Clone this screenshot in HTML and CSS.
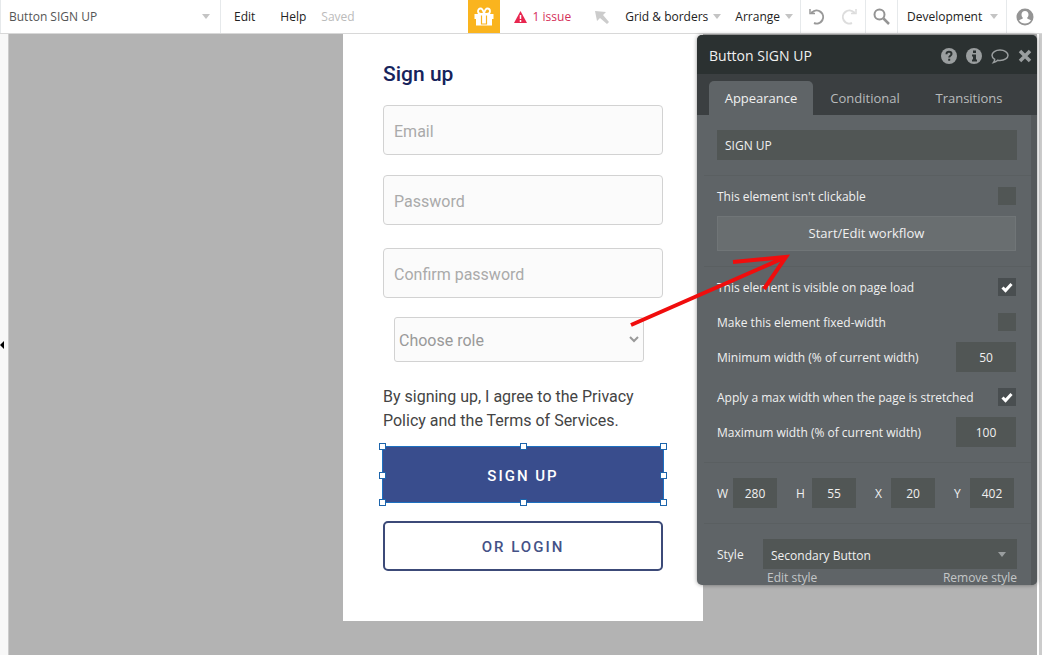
FILE: index.html
```html
<!DOCTYPE html>
<html lang="en">
<head>
    <meta charset="UTF-8">
    <meta name="viewport" content="width=device-width, initial-scale=1.0">
    <title>Editor - Button SIGN UP</title>
    <link rel="stylesheet" href="styles.css">
</head>
<body>
    <!-- Top bar -->
    <header class="toolbar">
        <button class="element-picker">Button SIGN UP <span class="caret"></span></button>
        <nav class="menu">
            <button>Edit</button>
            <button>Help</button>
            <span class="saved">Saved</span>
        </nav>
        <button class="gift" aria-label="Gift">
            <svg width="22" height="20" viewBox="0 0 22 20">
                <path d="M1.500 7h19v5h-19zM3 12h16v6.500H3z" fill="#fff"/>
                <path d="M10.500 7H8C6 7 5 5.800 5 4.300S6 1.500 7.500 1.500c2 0 3 3 3.500 5 .5-2 1.500-5 3.500-5C16 1.500 17 2.800 17 4.300S16 7 14 7z" fill="none" stroke="#fff" stroke-width="1.800"/>
                <path d="M8.500 8.500v8.500h5V8.500" fill="none" stroke="#fab41e" stroke-width="1.200"/>
            </svg>
        </button>
        <button class="issues">
            <svg width="13" height="12" viewBox="0 0 13 12">
                <path d="M6.500 0L13 12H0z" fill="#e8264f"/>
                <path d="M6.500 4v4M6.500 9v2" stroke="#fff" stroke-width="1.500"/>
            </svg>
            1 issue
        </button>
        <svg class="pointer" width="14" height="14" viewBox="0 0 14 14">
            <path d="M0 1l11 1-3 3 6 7-2 2-7-6-3 3z" fill="#ccc"/>
        </svg>
        <button class="drop">Grid &amp; borders <span class="caret"></span></button>
        <button class="drop">Arrange <span class="caret"></span></button>
        <div class="history">
            <button aria-label="Undo">
                <svg width="18" height="18" viewBox="0 0 18 18" fill="none" stroke="#999" stroke-width="2">
                    <path d="M3 4.500h1A6.500 6.500 0 1 1 6 15"/>
                    <path d="M2 1v4.500h5" stroke-width="1.500"/>
                </svg>
            </button>
            <button aria-label="Redo">
                <svg width="18" height="18" viewBox="0 0 18 18" fill="none" stroke="#ddd" stroke-width="2">
                    <path d="M15 4.500h-1A6.500 6.500 0 1 0 12 15"/>
                    <path d="M16 1v4.500h-5" stroke-width="1.500"/>
                </svg>
            </button>
        </div>
        <button class="search" aria-label="Search">
            <svg width="17" height="17" viewBox="0 0 17 17" fill="none" stroke="#949494">
                <circle cx="6.500" cy="6.500" r="5" stroke-width="2"/>
                <path d="M10.500 10.500l5.500 5.500" stroke-width="2.500"/>
            </svg>
        </button>
        <button class="version">Development <span class="caret"></span></button>
        <button class="account" aria-label="Account">
            <svg width="18" height="18" viewBox="0 0 18 18">
                <circle cx="9" cy="9" r="8.500" fill="#949494"/>
                <path d="M9 3c2.200 0 3.500 1.500 3.500 3.600 0 1.500-.6 2.700-1.500 3.400.3 1 3 1.200 4 2.500-1.500 2-3.500 3-6 3s-4.500-1-6-3c1-1.300 3.700-1.500 4-2.500-.9-.7-1.500-1.900-1.500-3.400C5.500 4.500 6.800 3 9 3z" fill="#fff"/>
            </svg>
        </button>
    </header>

    <main class="workspace">
        <div class="gutter-left">
            <svg width="4" height="8" viewBox="0 0 4 8"><path d="M4 0v8L0 4z"/></svg>
        </div>

        <!-- Page being edited -->
        <div class="canvas">
            <form class="page">
                <h1>Sign up</h1>
                <input class="field" type="email" placeholder="Email" aria-label="Email">
                <input class="field" type="password" placeholder="Password" aria-label="Password">
                <input class="field confirm" type="password" placeholder="Confirm password" aria-label="Confirm password">
                <div class="role">
                    <select aria-label="Choose role">
                        <option>Choose role</option>
                    </select>
                    <svg width="10" height="7" viewBox="0 0 10 7"><path d="M1 1l4 4 4-4" fill="none" stroke="#999" stroke-width="2"/></svg>
                </div>
                <p class="terms">By signing up, I agree to the Privacy Policy and the Terms of Services.</p>
                <div class="selected">
                    <button type="button" class="btn-signup">SIGN UP</button>
                    <span class="handle top left"></span>
                    <span class="handle top center"></span>
                    <span class="handle top right"></span>
                    <span class="handle middle left"></span>
                    <span class="handle middle right"></span>
                    <span class="handle bottom left"></span>
                    <span class="handle bottom center"></span>
                    <span class="handle bottom right"></span>
                </div>
                <button type="button" class="btn-login">OR LOGIN</button>
            </form>
        </div>
        <div class="gutter-right"></div>

        <!-- Property editor, floats over the canvas -->
        <aside class="panel">
            <div class="panel-inner">
                <div class="panel-head">
                    <h2>Button SIGN UP</h2>
                    <button aria-label="Help">
                        <svg width="16" height="16" viewBox="0 0 16 16">
                            <circle cx="8" cy="8" r="8" fill="#9a9e9f"/>
                            <path d="M5.500 6.200C5.500 4.500 6.500 3.800 8 3.800s2.500.8 2.500 2.200c0 1.800-2.300 1.700-2.300 3.500M8.200 10.800v2" fill="none" stroke="#2b3131" stroke-width="2"/>
                        </svg>
                    </button>
                    <button aria-label="Info">
                        <svg width="16" height="16" viewBox="0 0 16 16">
                            <circle cx="8" cy="8" r="8" fill="#9a9e9f"/>
                            <path d="M7 2.500h3v2.500H7zM6 6.500h4v5h1v2H6v-2h1v-3H6z" fill="#2b3131"/>
                        </svg>
                    </button>
                    <button aria-label="Comment">
                        <svg width="18" height="16" viewBox="0 0 18 16">
                            <path d="M9 2c4.500 0 8 2.300 8 5.200s-3.500 5.200-8 5.200c-.8 0-1.500 0-2.200-.2C5.500 13.500 4 14.200 2.500 14.500c.8-1 1.200-2 1.200-3.200C2 10.300 1 8.900 1 7.200 1 4.300 4.500 2 9 2z" fill="none" stroke="#9a9e9f" stroke-width="1.500"/>
                        </svg>
                    </button>
                    <button aria-label="Close">
                        <svg width="14" height="14" viewBox="0 0 14 14"><path d="M2 2l10 10M12 2L2 12" stroke="#9a9e9f" stroke-width="3.500"/></svg>
                    </button>
                </div>
                <div class="tabs">
                    <button class="active">Appearance</button>
                    <button>Conditional</button>
                    <button>Transitions</button>
                </div>
                <div class="panel-body">
                    <section class="padded">
                        <input class="caption" type="text" value="SIGN UP" aria-label="Caption">
                    </section>
                    <section>
                        <div class="row">
                            <label for="not-clickable">This element isn't clickable</label>
                            <input type="checkbox" id="not-clickable">
                        </div>
                        <button class="workflow">Start/Edit workflow</button>
                    </section>
                    <section>
                        <div class="row">
                            <label for="visible">This element is visible on page load</label>
                            <input type="checkbox" id="visible" checked>
                        </div>
                        <div class="row">
                            <label for="fixed">Make this element fixed-width</label>
                            <input type="checkbox" id="fixed">
                        </div>
                        <div class="row">
                            <label for="min-width">Minimum width (% of current width)</label>
                            <input class="number" type="text" id="min-width" value="50">
                        </div>
                        <div class="row spaced">
                            <label for="apply-max">Apply a max width when the page is stretched</label>
                            <input type="checkbox" id="apply-max" checked>
                        </div>
                        <div class="row">
                            <label for="max-width">Maximum width (% of current width)</label>
                            <input class="number" type="text" id="max-width" value="100">
                        </div>
                    </section>
                    <section class="padded">
                        <div class="dimensions">
                            <label><span>W</span><input type="text" value="280"></label>
                            <label><span>H</span><input type="text" value="55"></label>
                            <label><span>X</span><input type="text" value="20"></label>
                            <label><span>Y</span><input type="text" value="402"></label>
                        </div>
                    </section>
                    <section class="padded">
                        <div class="style-row">
                            <label for="style">Style</label>
                            <div class="style-select">
                                <select id="style">
                                    <option>Secondary Button</option>
                                </select>
                                <span class="caret"></span>
                            </div>
                        </div>
                        <div class="style-links">
                            <a href="#">Edit style</a>
                            <a href="#">Remove style</a>
                        </div>
                    </section>
                </div>
            </div>
            <!-- Arrow to the workflow button -->
            <svg class="arrow" width="165" height="80" viewBox="0 0 165 80">
                <path d="M4 74L159 6M106 11L159 6L137 38" fill="none" stroke="#f00d0d" stroke-width="4"/>
            </svg>
        </aside>
    </main>
</body>
</html>
```
FILE: styles.css
```css
* {
    box-sizing: border-box;
}

body {
    font-family: "Open Sans", sans-serif;
    font-size: 12px;
    margin: 0;
    min-height: 100vh;
    display: flex;
    flex-direction: column;
    color: #222;
    background-color: #fff;
}

button, input, select {
    font: inherit;
    color: inherit;
    margin: 0;
}

button {
    background: none;
    border: none;
    padding: 0;
    cursor: pointer;
}

svg {
    display: block;
    flex: none;
}

.caret {
    border: 4px solid transparent;
    border-top: 5px solid #c4c4c4;
    border-bottom: none;
}

/* Top bar */
.toolbar {
    display: flex;
    align-items: stretch;
    height: 34px;
    border-bottom: 1px solid #d8d8d8;
    white-space: nowrap;
}

.toolbar button {
    display: flex;
    align-items: center;
}

.toolbar .element-picker {
    width: 221px;
    padding: 0 10px 0 8px;
    justify-content: space-between;
    border-left: 1px solid #e6e9eb;
    border-right: 1px solid #e6e9eb;
    color: #555;
}

.menu {
    display: flex;
    align-items: center;
    flex: 1;
    padding-left: 13px;
}

.menu button {
    margin-right: 25px;
}

.saved {
    color: #bbb;
    margin-left: -10px;
}

.toolbar .gift {
    width: 32px;
    justify-content: center;
    background-color: #fab41e;
}

.toolbar .issues {
    gap: 6px;
    margin-left: 14px;
    color: #d5305a;
}

.pointer {
    align-self: center;
    margin: 0 16px 0 24px;
}

.toolbar .drop {
    gap: 5px;
    margin-right: 14px;
}

.toolbar .drop + .history {
    margin-left: -7px;
}

.history {
    display: flex;
    width: 66px;
    justify-content: space-around;
    border-left: 1px solid #e6e9eb;
    border-right: 1px solid #e6e9eb;
}

.toolbar .search {
    width: 31px;
    justify-content: center;
}

.toolbar .version {
    width: 110px;
    padding: 0 8px 0 9px;
    justify-content: space-between;
    border-left: 1px solid #e6e9eb;
    border-right: 1px solid #e6e9eb;
}

.toolbar .account {
    width: 35px;
    justify-content: center;
}

/* Workspace */
.workspace {
    position: relative;
    display: flex;
    flex: 1;
}

.gutter-left {
    display: flex;
    align-items: center;
    width: 9px;
    background-color: #f8f8f8;
    border-right: 1px solid #ccc;
}

.gutter-right {
    width: 5px;
    background-color: #ccc;
    border-left: 2px solid #fff;
}

.canvas {
    flex: 1;
    background-color: #b3b3b3;
}

/* Sign up page */
.page {
    width: 360px;
    margin: 0 auto;
    padding: 26px 40px 50px;
    background-color: #fff;
    font-family: Roboto, sans-serif;
    font-size: 16px;
}

.page h1 {
    margin: 0 0 17px;
    font-size: 21px;
    line-height: 28px;
    font-weight: 500;
    color: #16235c;
}

.field {
    display: block;
    width: 100%;
    height: 50px;
    margin-bottom: 20px;
    padding: 3px 10px 0;
    border: 1px solid #d2d2d2;
    border-radius: 4px;
    background-color: #fbfbfb;
}

.field::placeholder {
    color: #aaa;
}

.field.confirm {
    margin-top: 23px;
    margin-bottom: 19px;
}

.role {
    display: grid;
    align-items: center;
    margin: 0 19px 23px 11px;
}

.role select {
    grid-area: 1 / 1;
    height: 45px;
    padding: 2px 4px 0;
    border: 1px solid #d2d2d2;
    border-radius: 3px;
    background-color: #fbfbfb;
    color: #999;
    appearance: none;
}

.role svg {
    grid-area: 1 / 1;
    justify-self: end;
    margin-right: 5px;
    pointer-events: none;
}

.terms {
    margin: 0 0 14px;
    line-height: 24px;
    color: #444;
}

.selected {
    position: relative;
    height: 55px;
    margin-bottom: 19px;
    outline: 1px solid #1d70c0;
}

.btn-signup {
    width: 100%;
    height: 100%;
    padding-top: 2px;
    background-color: #394d8d;
    color: #fff;
    font-size: 15px;
    font-weight: 500;
    letter-spacing: 2px;
}

.handle {
    position: absolute;
    width: 7px;
    height: 7px;
    background-color: #fff;
    border: 1px solid #1d65ac;
}

.handle.top {
    top: -4px;
}

.handle.middle {
    top: 25px;
}

.handle.bottom {
    bottom: -4px;
}

.handle.left {
    left: -4px;
}

.handle.center {
    left: calc(50% - 3px);
}

.handle.right {
    right: -4px;
}

.btn-login {
    display: block;
    width: 100%;
    height: 50px;
    padding-top: 2px;
    border: 2px solid #3c4a78;
    border-radius: 5px;
    color: #445287;
    font-size: 15px;
    font-weight: 500;
    letter-spacing: 2px;
}

/* Property editor */
.panel {
    position: absolute;
    top: 1px;
    right: 5px;
    width: 340px;
    color: #f0f0f0;
}

.panel-inner {
    height: 550px;
    overflow: hidden;
    border-radius: 5px;
    background-color: #5f6467;
    box-shadow: 0 0 4px rgba(0, 0, 0, 0.4);
}

.panel-head {
    display: flex;
    align-items: center;
    gap: 9px;
    height: 39px;
    padding: 3px 5px 0 12px;
    background-color: #2b3131;
}

.panel-head h2 {
    flex: 1;
    margin: 0;
    padding-bottom: 2px;
    font-size: 14px;
    font-weight: normal;
}

.tabs {
    display: flex;
    height: 41px;
    padding: 7px 12px 0;
    background-color: #3b3f41;
    font-size: 13px;
}

.tabs button {
    width: 104px;
    color: #b8bbbc;
}

.tabs .active {
    background-color: #5f6467;
    border-radius: 5px 5px 0 0;
    color: #f0f0f0;
}

.panel-body {
    border-right: 6px solid #55595b;
}

.panel-body section {
    display: flex;
    flex-direction: column;
    gap: 5px;
    margin-left: 7px;
    padding: 5px 14px 15px 13px;
    border-bottom: 1px solid #5a5f61;
}

.panel-body section.padded {
    padding-top: 15px;
}

.panel-body input, .panel-body select {
    height: 30px;
    border: none;
    border-radius: 0;
    background-color: #515655;
}

.panel-body .caption {
    width: 100%;
    padding: 0 8px;
}

.row {
    display: flex;
    align-items: center;
    justify-content: space-between;
    height: 30px;
    padding-right: 1px;
}

.row.spaced {
    margin-top: 5px;
}

.row input[type="checkbox"] {
    appearance: none;
    width: 18px;
    height: 18px;
}

.row input[type="checkbox"]:checked {
    background: #494e50 url("data:image/svg+xml,%3Csvg xmlns='http://www.w3.org/2000/svg' viewBox='0 0 18 18'%3E%3Cpath d='M4.500 9.500l3 3 6-6.500' fill='none' stroke='white' stroke-width='3'/%3E%3C/svg%3E");
}

.row .number {
    width: 60px;
    text-align: center;
}

.workflow {
    height: 35px;
    margin-right: 1px;
    padding-bottom: 2px;
    background-color: #696e70;
    border: 1px solid #707577;
    font-size: 13px;
}

.dimensions {
    display: flex;
    gap: 19px;
}

.dimensions label {
    display: flex;
    align-items: center;
}

.dimensions span {
    width: 16px;
}

.dimensions input {
    width: 44px;
    padding: 0;
    text-align: center;
}

.style-row {
    display: flex;
    align-items: center;
}

.style-row label {
    width: 46px;
}

.style-select {
    display: grid;
    flex: 1;
    align-items: center;
}

.style-select select {
    grid-area: 1 / 1;
    padding: 2px 8px 0;
    appearance: none;
}

.style-select .caret {
    grid-area: 1 / 1;
    justify-self: end;
    margin-right: 11px;
    border-top-color: #9a9e9f;
    pointer-events: none;
}

.style-links {
    display: flex;
    justify-content: space-between;
    margin-top: -3px;
    padding-left: 50px;
    line-height: 14px;
}

.style-links a {
    color: #c4c7c8;
    text-decoration: none;
}

.arrow {
    position: absolute;
    top: 216px;
    left: -70px;
    pointer-events: none;
}
```
